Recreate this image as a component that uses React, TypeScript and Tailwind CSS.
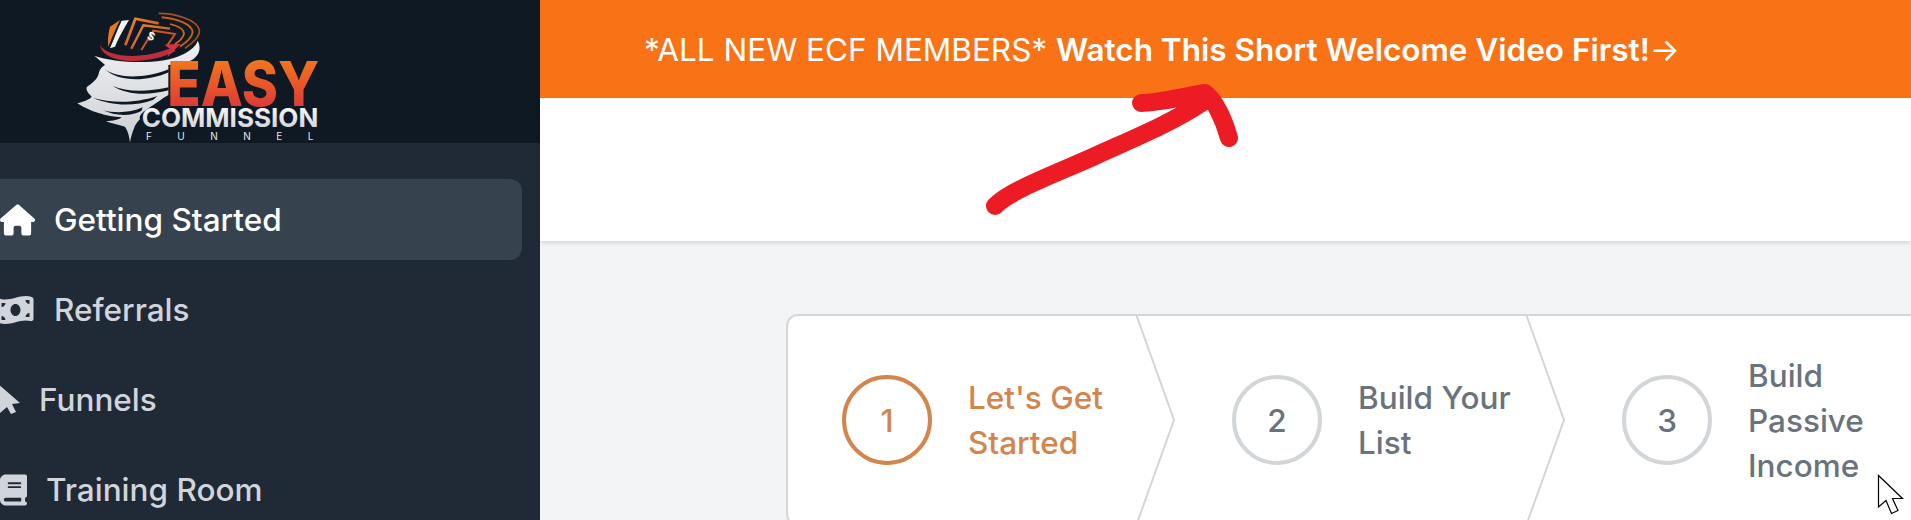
import { FaHouse, FaMoneyBillWave, FaBook } from "react-icons/fa6";

const inter = { fontFamily: "Inter, sans-serif" };

function Logo() {
  return (
    <svg viewBox="0 0 840 429" width="280" height="143" className="ml-[60px] block">
      <defs>
        <linearGradient id="easy" x1="0" y1="0" x2="0" y2="1">
          <stop offset="0" stopColor="#f58a17" />
          <stop offset="0.55" stopColor="#e8522c" />
          <stop offset="1" stopColor="#cf2a40" />
        </linearGradient>
        <linearGradient id="comm" x1="0" y1="0" x2="0" y2="1">
          <stop offset="0" stopColor="#ffffff" />
          <stop offset="1" stopColor="#c9ced4" />
        </linearGradient>
        <linearGradient id="torn" x1="0" y1="0" x2="0" y2="1">
          <stop offset="0" stopColor="#eff0f2" />
          <stop offset="1" stopColor="#cdd0d4" />
        </linearGradient>
        <linearGradient id="bill" x1="0" y1="0" x2="1" y2="1">
          <stop offset="0" stopColor="#f08a2a" />
          <stop offset="1" stopColor="#b8481c" />
        </linearGradient>
      </defs>
      {/* tornado silhouette */}
      <path
        d="M103 167C170 190 300 196 365 165C392 152 408 138 413 122C428 150 412 176 382 186L325 195L325 285C300 300 285 312 275 318L250 335C240 345 238 352 240 358C232 365 225 375 222 385C216 400 212 415 210 428C208 410 205 395 195 380C175 375 155 370 138 364C160 362 175 360 185 352C140 350 90 335 52 310C70 305 90 298 95 290C85 280 78 272 80 262C95 250 110 240 115 225C118 215 118 205 135 195C125 185 112 175 103 167Z"
        fill="url(#torn)"
      />
      {/* dark gaps between the bands */}
      <path d="M135 208C170 235 250 238 326 208L326 217C250 250 170 242 135 208Z" fill="#0f1924" />
      <path d="M158 258C200 276 260 276 326 262L326 271C260 288 200 284 158 258Z" fill="#0f1924" />
      <path d="M100 294C150 308 220 312 292 288L280 299C220 322 150 316 100 294Z" fill="#0f1924" />
      <path d="M128 330C160 340 210 340 248 322L244 333C210 350 165 348 128 330Z" fill="#0f1924" />
      {/* bills */}
      <path d="M185 62L207 60C195 80 175 115 165 140L150 145C160 120 172 90 185 62Z" fill="#f2f2f2" />
      <path d="M150 80L180 60C170 80 155 115 145 140C142 120 145 100 150 80Z" fill="#e8761f" />
      <path d="M196 136L226 56L296 70" stroke="url(#bill)" strokeWidth="8" fill="none" />
      <path d="M214 146L250 76L330 86" stroke="url(#bill)" strokeWidth="7" fill="none" />
      <path d="M244 150L280 92L345 102L322 136" stroke="#c9551f" strokeWidth="6" fill="none" />
      <text x="264" y="122" fontSize="36" fontWeight="700" fill="#ffffff" transform="rotate(25 277 108)" fontFamily="Liberation Sans, sans-serif">$</text>
      {/* top arcs */}
      <path d="M296 40C345 40 410 58 418 90C420 112 395 130 375 145" stroke="#a9501f" strokeWidth="5" fill="none" />
      <path d="M305 52C350 56 395 72 398 96C396 115 375 130 360 140" stroke="#c95f1d" strokeWidth="6" fill="none" />
      <path d="M330 72C355 78 372 88 372 102C368 115 355 126 345 132" stroke="#d9661d" strokeWidth="5" fill="none" />
      {/* red swoosh */}
      <path d="M120 135C140 172 250 182 338 142L346 154C260 198 128 192 120 135Z" fill="#bf2d3c" />
      <path d="M362 131L312 134L332 148L322 172Z" fill="#d5313f" />
      {/* wordmark */}
      <text x="322" y="318" fontSize="186" fontWeight="800" fill="url(#easy)" textLength="456" lengthAdjust="spacingAndGlyphs" fontFamily="Inter, sans-serif">EASY</text>
      <text x="245" y="381" fontSize="78" fontWeight="700" fill="url(#comm)" textLength="530" lengthAdjust="spacingAndGlyphs" fontFamily="Inter, sans-serif">COMMISSION</text>
      <text x="258" y="420" fontSize="30" fontWeight="400" fill="#e5e7eb" textLength="502" fontFamily="Inter, sans-serif">FUNNEL</text>
    </svg>
  );
}

function NavRow({ icon, label, active }: { icon: React.ReactNode; label: string; active?: boolean }) {
  return (
    <div
      className={
        active
          ? "flex items-center h-[81px] -ml-5 pl-5 rounded-xl bg-[#37424f] text-white font-medium gap-[19px]"
          : "flex items-center h-[81px] -ml-5 pl-5 rounded-xl text-[#d1d5db] font-medium gap-[19px]"
      }
    >
      {icon}
      <span>{label}</span>
    </div>
  );
}

function Step({ n, label, active, last }: { n: string; label: string; active?: boolean; last?: boolean }) {
  return (
    <div className="relative flex items-center w-[390px] pl-[54px] gap-[36px] shrink-0">
      <div
        className={
          active
            ? "w-[90px] h-[90px] shrink-0 rounded-full border-[4px] border-[#d4844d] text-[#d4844d] flex items-center justify-center"
            : "w-[90px] h-[90px] shrink-0 rounded-full border-[4px] border-[#d2d6d9] text-[#6a737d] flex items-center justify-center"
        }
      >
        {n}
      </div>
      <div className={active ? "w-[160px] text-[#d4844d]" : "w-[160px] text-[#6a737d]"}>{label}</div>
      {!last && (
        <svg className="absolute right-[3px] top-0 h-full w-[40px]" viewBox="0 0 40 208" preserveAspectRatio="none">
          <polyline points="1,-2 39,104 1,210" fill="none" stroke="#d2d6d9" strokeWidth="2" />
        </svg>
      )}
    </div>
  );
}

export default function App() {
  return (
    <div className="relative flex w-[1911px] h-[520px] overflow-hidden text-[31.5px] leading-[45px]" style={inter}>
      <aside className="w-[540px] shrink-0 bg-[#1f2a36] flex flex-col overflow-hidden">
        <div className="h-[143px] bg-[#0f1924] shrink-0">
          <Logo />
        </div>
        <nav className="pt-[36px] pr-[18px] flex flex-col gap-[9px]">
          <NavRow active icon={<FaHouse className="shrink-0 w-[35px] h-[32px]" />} label="Getting Started" />
          <NavRow icon={<FaMoneyBillWave className="shrink-0 w-[39px] h-[32px] -ml-[4px]" />} label="Referrals" />
          <NavRow
            icon={
              <svg className="shrink-0 w-[20px] h-[28px]" viewBox="0 0 20 28" fill="currentColor">
                <path d="M-3-3L20 17L12 18L16 26L11 28L7 21L0 27L-3 27Z" />
              </svg>
            }
            label="Funnels"
          />
          <NavRow icon={<FaBook className="shrink-0 w-[27px] h-[32px]" />} label="Training Room" />
        </nav>
      </aside>
      <main className="flex-1 min-w-0 bg-[#f3f4f6] flex flex-col">
        <div className="h-[98px] shrink-0 bg-[#f97316] text-white flex items-center pl-[104px] whitespace-nowrap">
          <span>*ALL NEW ECF MEMBERS*&nbsp;</span>
          <span className="font-semibold">Watch This Short Welcome Video First!</span>
          <span>→</span>
        </div>
        <div className="h-[143px] shrink-0 bg-white shadow-[0_2px_4px_rgba(0,0,0,0.12)]" />
        <div className="pt-[73px] pl-[246px]">
          <div className="flex w-[1300px] h-[212px] bg-white border-2 border-[#d2d6d9] rounded-xl font-medium">
            <Step active n="1" label="Let's Get Started" />
            <Step n="2" label="Build Your List" />
            <Step last n="3" label="Build Passive Income" />
          </div>
        </div>
      </main>
      {/* hand-drawn annotation */}
      <svg className="absolute left-[980px] top-[75px] pointer-events-none" width="270" height="145" viewBox="980 75 270 145">
        <path
          d="M995 206C1010 190 1060 172 1095 156C1130 140 1170 124 1203 102M1141 103C1160 103 1185 96 1205 93C1215 100 1224 120 1229 138"
          fill="none"
          stroke="#ed1c24"
          strokeWidth="18"
          strokeLinecap="round"
          strokeLinejoin="round"
        />
      </svg>
      {/* mouse cursor */}
      <svg className="absolute left-[1877px] top-[474px]" width="28" height="42" viewBox="0 0 28 42">
        <path d="M1.5 1.5V33L9 26.5L14.5 39.5L21 36.5L15.5 24.5H25.5Z" fill="#fff" stroke="#000" strokeWidth="1.2" strokeLinejoin="miter" />
      </svg>
    </div>
  );
}
